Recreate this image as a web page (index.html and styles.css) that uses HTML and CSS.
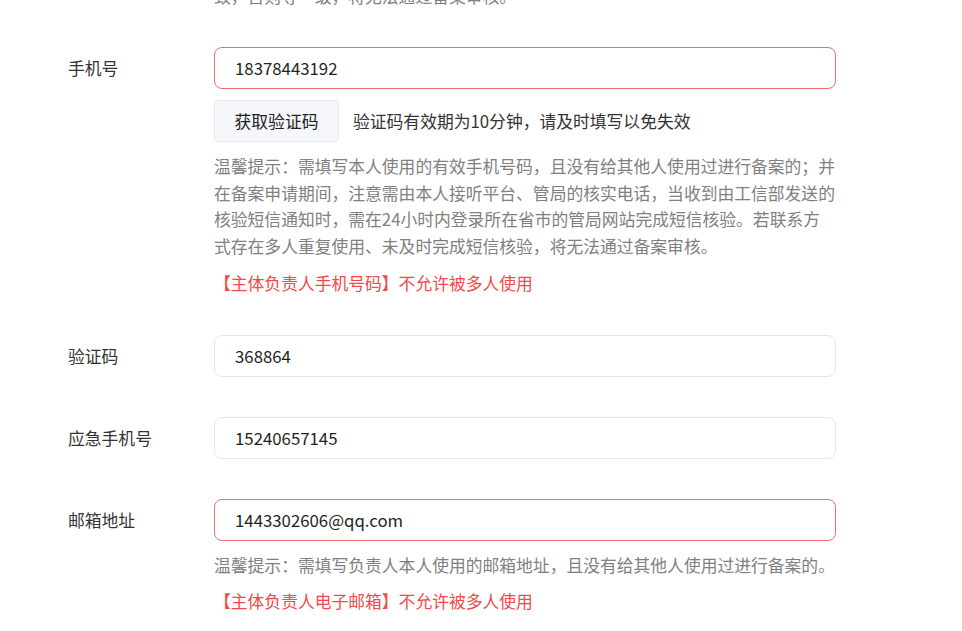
FILE: index.html
```html
<!DOCTYPE html>
<html>
<head>
  <meta charset="utf-8">
  <title>备案信息</title>
  <link rel="stylesheet" href="styles.css">
</head>
<body>

  <div id="form">

    <div class="item">
      <div class="label"></div>
      <div class="value">
        <p class="tip top_cut">致，否则等一级，将无法通过备案审核。</p>
      </div>
    </div>

    <div class="item">
      <div class="label">手机号</div>
      <div class="value">
        <div class="input error">18378443192</div>
        <div class="code_row">
          <button class="btn">获取验证码</button>
          <span class="code_note">验证码有效期为10分钟，请及时填写以免失效</span>
        </div>
        <p class="tip">温馨提示：需填写本人使用的有效手机号码，且没有给其他人使用过进行备案的；并在备案申请期间，注意需由本人接听平台、管局的核实电话，当收到由工信部发送的核验短信通知时，需在24小时内登录所在省市的管局网站完成短信核验。若联系方式存在多人重复使用、未及时完成短信核验，将无法通过备案审核。</p>
        <p class="warn">【主体负责人手机号码】不允许被多人使用</p>
      </div>
    </div>

    <div class="item">
      <div class="label">验证码</div>
      <div class="value">
        <div class="input">368864</div>
      </div>
    </div>

    <div class="item">
      <div class="label">应急手机号</div>
      <div class="value">
        <div class="input">15240657145</div>
      </div>
    </div>

    <div class="item">
      <div class="label">邮箱地址</div>
      <div class="value">
        <div class="input error">1443302606@qq.com</div>
        <p class="tip">温馨提示：需填写负责人本人使用的邮箱地址，且没有给其他人使用过进行备案的。</p>
        <p class="warn">【主体负责人电子邮箱】不允许被多人使用</p>
      </div>
    </div>

  </div>

</body>
</html>
```

FILE: styles.css
```css
body {
  margin: 0;
  background-color: #ffffff;
  font-family: "Noto Sans CJK SC", "Noto Sans", sans-serif;
  font-size: 16.8px;
  color: #333333;
  overflow: hidden;
}

p {
  margin: 0;
}

#form {
  padding-left: 68px;
}

.item {
  display: flex;
  margin-bottom: 40px;
}

.label {
  width: 146px;
  flex-shrink: 0;
  height: 42px;
  line-height: 42px;
  color: #333333;
}

.label:empty {
  height: auto;
}

.value {
  width: 622px;
}

.input {
  box-sizing: border-box;
  height: 42px;
  line-height: 40px;
  padding: 0 20px;
  border: 1px solid #e4e7ed;
  border-radius: 8px;
  color: #1f1f1f;
}

.input.error {
  border-color: #f56c6c;
}

.code_row {
  display: flex;
  align-items: center;
  margin-top: 11px;
}

.btn {
  box-sizing: border-box;
  width: 125px;
  height: 42px;
  background: #f5f7fa;
  border: 1px solid #e4e7ed;
  border-radius: 4px;
  font-family: inherit;
  font-size: 16.8px;
  color: #222222;
  padding: 0;
}

.code_note {
  margin-left: 14px;
  color: #333333;
}

.tip {
  margin-top: 11px;
  line-height: 26.7px;
  color: #808080;
}

.top_cut {
  margin-top: -17px;
  margin-bottom: -3px;
  height: 27px;
}

.warn {
  margin-top: 10px;
  margin-bottom: -2px;
  line-height: 26.7px;
  color: #f5484a;
}
```
